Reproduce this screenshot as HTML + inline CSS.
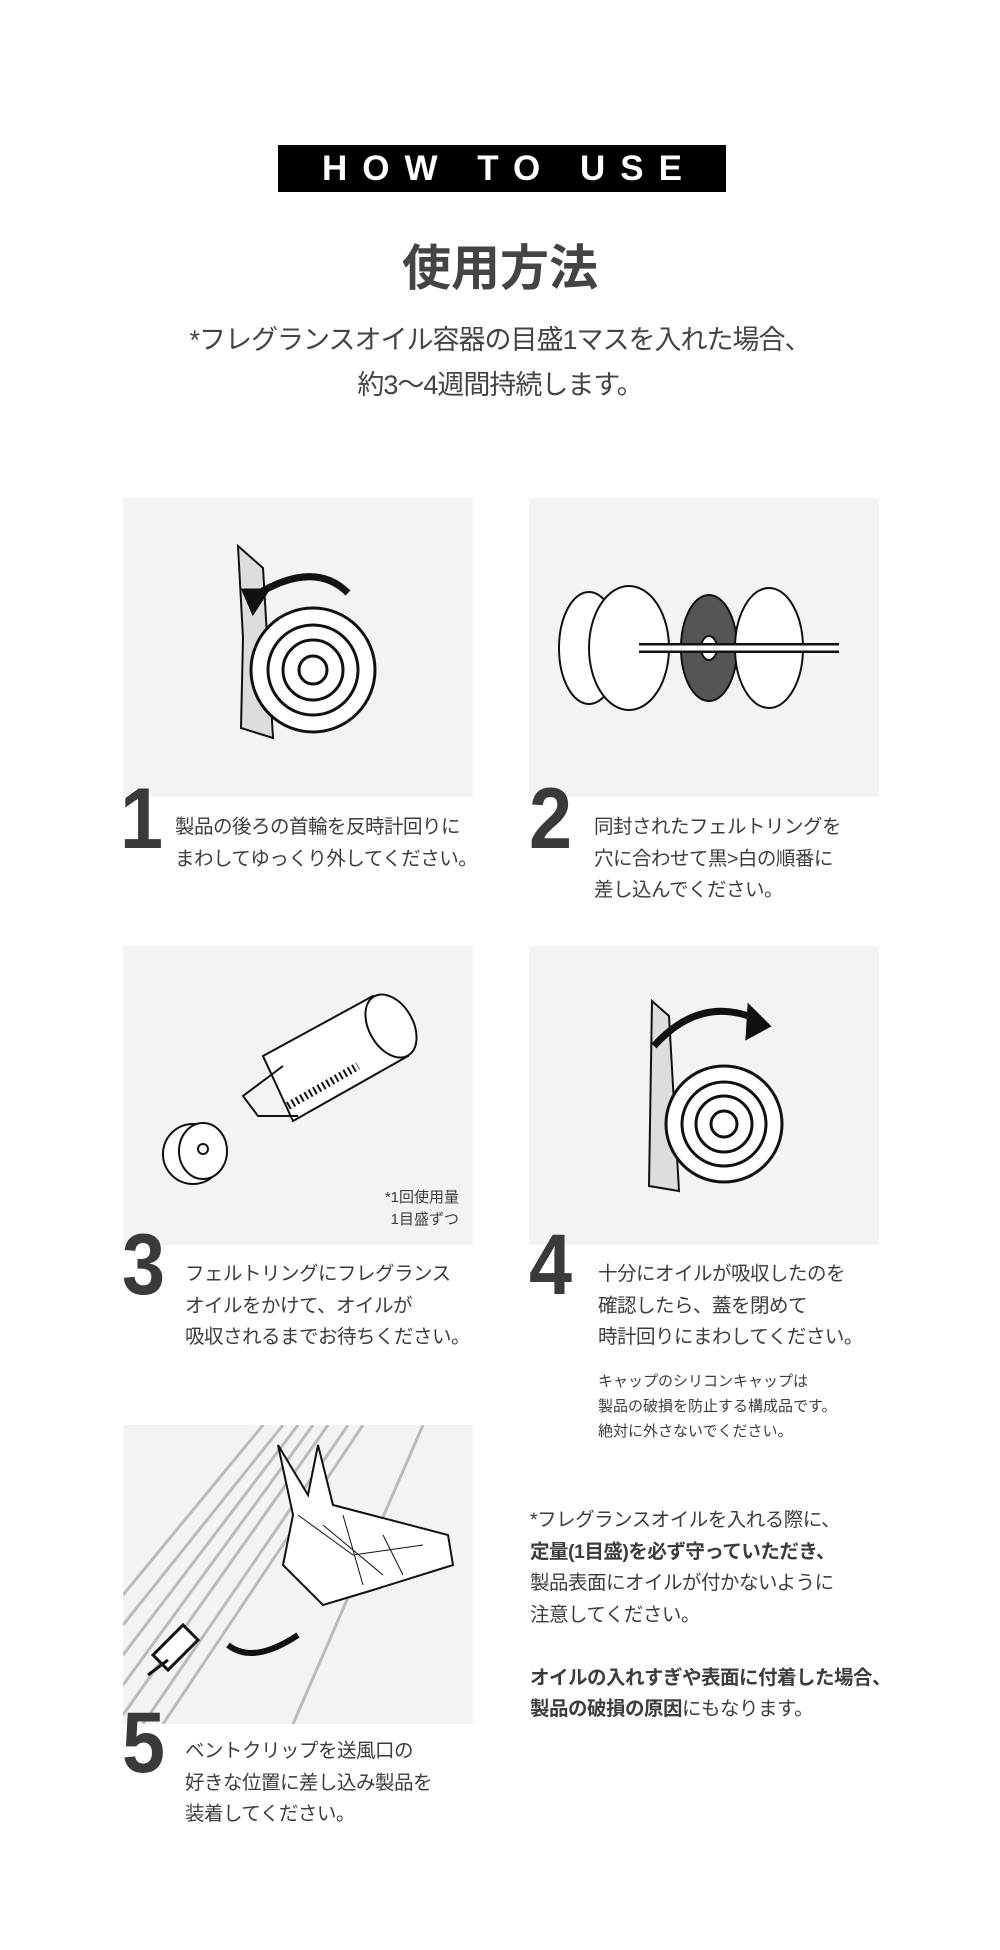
<!DOCTYPE html>
<html><head><meta charset="utf-8"><style>
*{margin:0;padding:0;box-sizing:border-box}
body{width:1000px;height:1950px;background:#fff;position:relative;overflow:hidden;font-family:"Liberation Sans","Noto Sans CJK JP",sans-serif;color:#3d3d3d}
.a{position:absolute;white-space:nowrap}
.hdr{left:278px;top:145px;width:448px;height:47px;background:#000;color:#fff;font-size:35px;font-weight:bold;letter-spacing:15px;text-align:center;line-height:47px;padding-left:15px}
.panel{position:absolute;width:350px;height:299px;background:#f3f3f3;overflow:hidden}
.num{position:absolute;font-family:"Liberation Sans",sans-serif;font-weight:bold;font-size:86px;line-height:1;color:#3a3a3a;transform:scaleX(0.9);transform-origin:left}
.t{position:absolute;font-size:19.5px;line-height:31.5px;white-space:nowrap;letter-spacing:-0.5px}
.s{position:absolute;font-size:15px;line-height:25px;white-space:nowrap}
b{font-weight:bold}
</style></head><body>
<div class="a hdr">HOW TO USE</div>
<div class="a" style="left:0;width:1000px;top:229px;text-align:center;font-size:49px;font-weight:bold;color:#444">使用方法</div>
<div class="a" style="left:0;width:1000px;top:318px;text-align:center;font-size:27px;line-height:45px;letter-spacing:-1px;color:#444">*フレグランスオイル容器の目盛1マスを入れた場合、<br>約3〜4週間持続します。</div>

<div class="panel" style="left:123px;top:498px">
<svg width="350" height="299" fill="none" stroke="#111" stroke-width="3">
<path d="M115 48 L120 140 L118 230 L150 240 L140 70 Z" fill="#ddd" stroke-width="2"/>
<circle cx="190" cy="172" r="62" fill="#fff"/>
<circle cx="190" cy="172" r="45"/><circle cx="190" cy="172" r="30"/><circle cx="190" cy="172" r="14"/>
<path d="M225 95 Q190 60 128 100" stroke-width="7"/><path d="M120 92 L130 115 L145 92 Z" fill="#111"/>
</svg></div>
<div class="num" style="left:120px;top:776px">1</div>
<div class="t" style="left:175px;top:812px">製品の後ろの首輪を反時計回りに<br>まわしてゆっくり外してください。</div>

<div class="panel" style="left:529px;top:498px">
<svg width="350" height="299" fill="none" stroke="#111" stroke-width="2">
<ellipse cx="60" cy="150" rx="30" ry="56" fill="#fff"/><ellipse cx="100" cy="150" rx="40" ry="62" fill="#fff"/>
<ellipse cx="180" cy="150" rx="28" ry="53" fill="#555"/><ellipse cx="180" cy="150" rx="8" ry="12" fill="#fff"/>
<ellipse cx="240" cy="150" rx="34" ry="60" fill="#fff"/>
<path d="M110 150 L310 150" stroke-width="10"/><path d="M110 150 L310 150" stroke="#fff" stroke-width="5"/>
</svg></div>
<div class="num" style="left:529px;top:776px">2</div>
<div class="t" style="left:594px;top:812px">同封されたフェルトリングを<br>穴に合わせて黒&gt;白の順番に<br>差し込んでください。</div>

<div class="panel" style="left:123px;top:946px">
<svg width="350" height="299" fill="none" stroke="#111" stroke-width="2">
<path d="M140 110 L250 50 L285 110 L170 175 Z" fill="#fff"/>
<ellipse cx="268" cy="80" rx="22" ry="34" transform="rotate(-30 268 80)" fill="#fff"/>
<path d="M160 120 L120 150 L135 170 L175 170"/>
<path d="M165 160 L235 120" stroke-width="8" stroke-dasharray="2 3"/>
<ellipse cx="70" cy="208" rx="30" ry="30" fill="#fff"/><ellipse cx="80" cy="205" rx="24" ry="28" fill="#fff"/><circle cx="80" cy="203" r="5"/>
</svg>
<div class="s" style="right:14px;top:241px;text-align:right;line-height:22px">*1回使用量<br>1目盛ずつ</div></div>
<div class="num" style="left:122px;top:1222px">3</div>
<div class="t" style="left:185px;top:1259px">フェルトリングにフレグランス<br>オイルをかけて、オイルが<br>吸収されるまでお待ちください。</div>

<div class="panel" style="left:529px;top:946px">
<svg width="350" height="299" fill="none" stroke="#111" stroke-width="3">
<path d="M123 55 L120 240 L150 245 L140 70 Z" fill="#ddd" stroke-width="2"/>
<circle cx="195" cy="178" r="58" fill="#fff"/>
<circle cx="195" cy="178" r="42"/><circle cx="195" cy="178" r="28"/><circle cx="195" cy="178" r="13"/>
<path d="M125 100 Q170 50 225 72" stroke-width="7"/><path d="M220 60 L240 80 L218 92 Z" fill="#111"/>
</svg></div>
<div class="num" style="left:529px;top:1222px">4</div>
<div class="t" style="left:598px;top:1259px">十分にオイルが吸収したのを<br>確認したら、蓋を閉めて<br>時計回りにまわしてください。</div>
<div class="s" style="left:598px;top:1369px">キャップのシリコンキャップは<br>製品の破損を防止する構成品です。<br>絶対に外さないでください。</div>

<div class="panel" style="left:123px;top:1425px">
<svg width="350" height="299" fill="none" stroke="#bbb" stroke-width="3">
<path d="M0 170 L140 0 M0 200 L160 0 M0 230 L175 0 M0 260 L190 0 M0 290 L205 0 M20 299 L225 0 M40 299 L240 0 M170 299 L300 0"/>
<path d="M170 90 L155 20 L185 70 L195 20 L210 80 L325 110 L330 140 L250 165 L200 180 L160 140 Z" fill="#fff" stroke="#111" stroke-width="2"/>
<path d="M175 90 L230 130 L300 120 M200 100 L260 150 M220 90 L240 160 M260 110 L280 150" stroke="#111" stroke-width="1"/>
<path d="M175 210 Q130 240 105 220" stroke="#111" stroke-width="6"/>
<path d="M30 230 L60 200 L75 215 L45 245 Z M25 250 L45 235" stroke="#111" stroke-width="3" fill="#fff"/>
</svg></div>
<div class="num" style="left:122px;top:1700px">5</div>
<div class="t" style="left:185px;top:1736px">ベントクリップを送風口の<br>好きな位置に差し込み製品を<br>装着してください。</div>

<div class="t" style="left:530px;top:1505px">*フレグランスオイルを入れる際に、<br><b>定量(1目盛)を必ず守っていただき、</b><br>製品表面にオイルが付かないように<br>注意してください。<br><br><b>オイルの入れすぎや表面に付着した場合、</b><br><b>製品の破損の原因</b>にもなります。</div>
</body></html>
